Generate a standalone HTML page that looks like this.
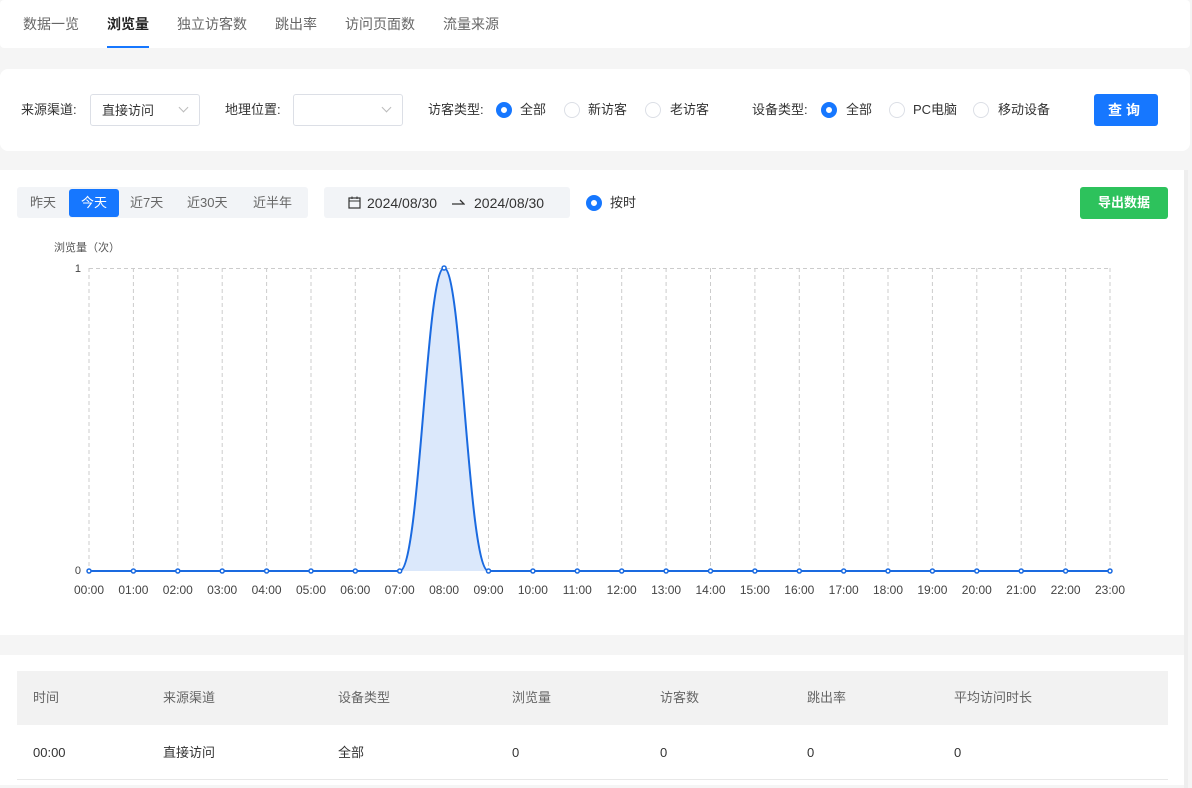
<!DOCTYPE html>
<html><head><meta charset="utf-8"><style>
*{box-sizing:border-box;margin:0;padding:0}
body{width:1192px;height:788px;background:#f5f5f5;font-family:"Liberation Sans","Noto Sans CJK SC",sans-serif;font-size:13px;line-height:16px;color:#333;position:relative;overflow:hidden}
div,span{line-height:16px}
.card{position:absolute;background:#fff;border-radius:4px}
.tab{position:absolute;top:16px;font-size:14px;color:#666}
.lbl{position:absolute;top:102px;font-size:13px;color:#333}
.sel{position:absolute;top:94px;height:32px;border:1px solid #dcdfe6;border-radius:3px;background:#fff}
.sel .t{position:absolute;left:11px;top:7px}
.sel .a{position:absolute;right:12px;top:9px;width:7px;height:7px;border-right:1px solid #bbb;border-bottom:1px solid #bbb;transform:rotate(45deg)}
.r{position:absolute;top:102px;width:16px;height:16px;border-radius:50%;border:1px solid #dcdfe6;background:#fff}
.r.on{border:5px solid #1677ff}
.rt{position:absolute;top:102px;font-size:13px;color:#333}
.th{position:absolute;top:690px;color:#666;font-size:13px}
.td{position:absolute;top:745px;color:#333;font-size:13px}
.b{position:absolute;top:195px}
</style></head><body>
<div class="card" style="left:0;top:0;width:1190px;height:48px"></div>
<div class="tab" style="left:23px">数据一览</div>
<div class="tab" style="left:107px;color:#222;font-weight:bold">浏览量</div>
<div style="position:absolute;left:107px;top:46px;width:42px;height:2px;background:#1677ff"></div>
<div class="tab" style="left:177px">独立访客数</div>
<div class="tab" style="left:275px">跳出率</div>
<div class="tab" style="left:345px">访问页面数</div>
<div class="tab" style="left:443px">流量来源</div>

<div class="card" style="left:0;top:69px;width:1190px;height:82px;border-radius:8px"></div>
<div class="lbl" style="left:21px">来源渠道:</div>
<div class="sel" style="left:90px;width:110px"><span class="t" style="top:8px">直接访问</span><span class="a"></span></div>
<div class="lbl" style="left:225px">地理位置:</div>
<div class="sel" style="left:293px;width:110px"><span class="a"></span></div>
<div class="lbl" style="left:428px">访客类型:</div>
<div class="r on" style="left:496px"></div><div class="rt" style="left:520px">全部</div>
<div class="r" style="left:564px"></div><div class="rt" style="left:588px">新访客</div>
<div class="r" style="left:645px"></div><div class="rt" style="left:670px">老访客</div>
<div class="lbl" style="left:752px">设备类型:</div>
<div class="r on" style="left:821px"></div><div class="rt" style="left:846px">全部</div>
<div class="r" style="left:889px"></div><div class="rt" style="left:913px">PC电脑</div>
<div class="r" style="left:973px"></div><div class="rt" style="left:998px">移动设备</div>
<div style="position:absolute;left:1094px;top:94px;width:64px;height:32px;background:#1677ff;border-radius:3px;color:#fff;font-size:14px;text-align:center;line-height:32px;letter-spacing:4px;font-weight:bold">查询</div>

<div class="card" style="left:0;top:170px;width:1184px;height:465px;border-radius:0"></div>
<div style="position:absolute;left:1184px;top:170px;width:4px;height:618px;background:#eee"></div>
<div style="position:absolute;left:17px;top:187px;width:291px;height:31px;background:#f2f4f7;border-radius:3px"></div>
<div style="position:absolute;left:69px;top:189px;width:50px;height:28px;background:#1677ff;border-radius:3px"></div>
<div class="b" style="left:30px;color:#666">昨天</div>
<div class="b" style="left:81px;color:#fff">今天</div>
<div class="b" style="left:130px;color:#666">近7天</div>
<div class="b" style="left:187px;color:#666">近30天</div>
<div class="b" style="left:253px;color:#666">近半年</div>
<div style="position:absolute;left:324px;top:187px;width:246px;height:31px;background:#f2f4f7;border-radius:3px"></div>
<svg style="position:absolute;left:348px;top:196px" width="13" height="13" viewBox="0 0 13 13"><rect x="1" y="2" width="11" height="10" fill="none" stroke="#333" stroke-width="1.2"/><line x1="1" y1="5" x2="12" y2="5" stroke="#333"/><line x1="4" y1="0.5" x2="4" y2="3" stroke="#333"/><line x1="9" y1="0.5" x2="9" y2="3" stroke="#333"/></svg>
<div class="b" style="left:367px;font-size:14px">2024/08/30</div>
<svg style="position:absolute;left:451px;top:198px" width="14" height="8"><path d="M1,6 H13 L9,2" fill="none" stroke="#333" stroke-width="1.3"/></svg>
<div class="b" style="left:474px;font-size:14px">2024/08/30</div>
<div class="r on" style="left:586px;top:195px"></div><div class="rt" style="left:610px;top:195px">按时</div>
<div style="position:absolute;left:1080px;top:187px;width:88px;height:32px;background:#2dc25c;border-radius:3px;color:#fff;text-align:center;line-height:32px;font-weight:bold">导出数据</div>

<svg style="position:absolute;left:0;top:230px" width="1184" height="380">
<text x="54" y="21" font-size="11" fill="#555" font-family="Liberation Sans,Noto Sans CJK SC,sans-serif">浏览量（次）</text>
<text x="81" y="42" font-size="11" fill="#444" text-anchor="end" font-family="Liberation Sans,sans-serif">1</text>
<text x="81" y="344" font-size="11" fill="#444" text-anchor="end" font-family="Liberation Sans,sans-serif">0</text>
<line x1="89" y1="38.5" x2="1110" y2="38.5" stroke="#ccc" stroke-dasharray="4,3"/>
<g stroke="#ccc" stroke-dasharray="4,3">
<line x1="89" y1="38" x2="89" y2="341"/><line x1="133.4" y1="38" x2="133.4" y2="341"/><line x1="177.8" y1="38" x2="177.8" y2="341"/><line x1="222.2" y1="38" x2="222.2" y2="341"/><line x1="266.6" y1="38" x2="266.6" y2="341"/><line x1="311" y1="38" x2="311" y2="341"/><line x1="355.3" y1="38" x2="355.3" y2="341"/><line x1="399.7" y1="38" x2="399.7" y2="341"/><line x1="444.1" y1="38" x2="444.1" y2="341"/><line x1="488.5" y1="38" x2="488.5" y2="341"/><line x1="532.9" y1="38" x2="532.9" y2="341"/><line x1="577.3" y1="38" x2="577.3" y2="341"/><line x1="621.7" y1="38" x2="621.7" y2="341"/><line x1="666.1" y1="38" x2="666.1" y2="341"/><line x1="710.5" y1="38" x2="710.5" y2="341"/><line x1="754.9" y1="38" x2="754.9" y2="341"/><line x1="799.3" y1="38" x2="799.3" y2="341"/><line x1="843.7" y1="38" x2="843.7" y2="341"/><line x1="888" y1="38" x2="888" y2="341"/><line x1="932.4" y1="38" x2="932.4" y2="341"/><line x1="976.8" y1="38" x2="976.8" y2="341"/><line x1="1021.2" y1="38" x2="1021.2" y2="341"/><line x1="1065.6" y1="38" x2="1065.6" y2="341"/><line x1="1110" y1="38" x2="1110" y2="341"/>
</g>
<path d="M399.7,341 C420,341 426,38 444.1,38 C462,38 468,341 488.5,341 Z" fill="#dbe8fb"/>
<path d="M89,341 L399.7,341 C420,341 426,38 444.1,38 C462,38 468,341 488.5,341 L1110,341" fill="none" stroke="#1a6ae0" stroke-width="2"/>
<g fill="#fff" stroke="#1a6ae0" stroke-width="1.5">
<circle cx="89" cy="341" r="2"/><circle cx="133.4" cy="341" r="2"/><circle cx="177.8" cy="341" r="2"/><circle cx="222.2" cy="341" r="2"/><circle cx="266.6" cy="341" r="2"/><circle cx="311" cy="341" r="2"/><circle cx="355.3" cy="341" r="2"/><circle cx="399.7" cy="341" r="2"/><circle cx="444.1" cy="38" r="2"/><circle cx="488.5" cy="341" r="2"/><circle cx="532.9" cy="341" r="2"/><circle cx="577.3" cy="341" r="2"/><circle cx="621.7" cy="341" r="2"/><circle cx="666.1" cy="341" r="2"/><circle cx="710.5" cy="341" r="2"/><circle cx="754.9" cy="341" r="2"/><circle cx="799.3" cy="341" r="2"/><circle cx="843.7" cy="341" r="2"/><circle cx="888" cy="341" r="2"/><circle cx="932.4" cy="341" r="2"/><circle cx="976.8" cy="341" r="2"/><circle cx="1021.2" cy="341" r="2"/><circle cx="1065.6" cy="341" r="2"/><circle cx="1110" cy="341" r="2"/>
</g>
<g font-size="12" fill="#444" text-anchor="middle" font-family="Liberation Sans,sans-serif">
<text x="89" y="364">00:00</text><text x="133.4" y="364">01:00</text><text x="177.8" y="364">02:00</text><text x="222.2" y="364">03:00</text><text x="266.6" y="364">04:00</text><text x="311" y="364">05:00</text><text x="355.3" y="364">06:00</text><text x="399.7" y="364">07:00</text><text x="444.1" y="364">08:00</text><text x="488.5" y="364">09:00</text><text x="532.9" y="364">10:00</text><text x="577.3" y="364">11:00</text><text x="621.7" y="364">12:00</text><text x="666.1" y="364">13:00</text><text x="710.5" y="364">14:00</text><text x="754.9" y="364">15:00</text><text x="799.3" y="364">16:00</text><text x="843.7" y="364">17:00</text><text x="888" y="364">18:00</text><text x="932.4" y="364">19:00</text><text x="976.8" y="364">20:00</text><text x="1021.2" y="364">21:00</text><text x="1065.6" y="364">22:00</text><text x="1110" y="364">23:00</text>
</g>
</svg>

<div class="card" style="left:0;top:655px;width:1184px;height:130px;border-radius:0"></div>
<div style="position:absolute;left:17px;top:671px;width:1151px;height:54px;background:#f2f2f2"></div>
<div style="position:absolute;left:17px;top:779px;width:1151px;height:1px;background:#e8e8e8"></div>
<div class="th" style="left:33px">时间</div><div class="th" style="left:163px">来源渠道</div><div class="th" style="left:338px">设备类型</div><div class="th" style="left:512px">浏览量</div><div class="th" style="left:660px">访客数</div><div class="th" style="left:807px">跳出率</div><div class="th" style="left:954px">平均访问时长</div>
<div class="td" style="left:33px">00:00</div><div class="td" style="left:163px">直接访问</div><div class="td" style="left:338px">全部</div><div class="td" style="left:512px">0</div><div class="td" style="left:660px">0</div><div class="td" style="left:807px">0</div><div class="td" style="left:954px">0</div>
</body></html>
